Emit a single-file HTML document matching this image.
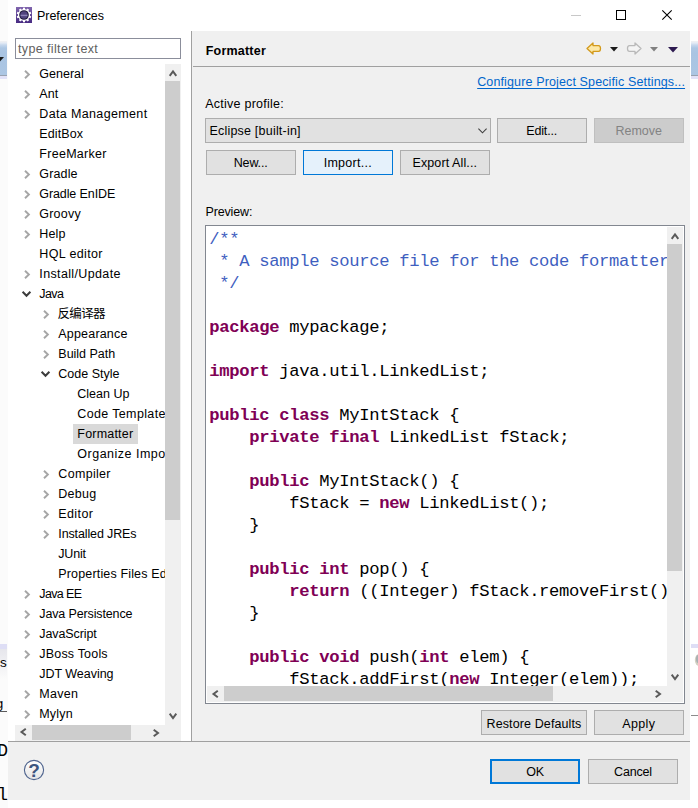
<!DOCTYPE html>
<html lang="en"><head><meta charset="utf-8"><title>Preferences</title>
<style>
html,body{margin:0;padding:0;}
body{width:698px;height:808px;overflow:hidden;background:#fff;position:relative;font-family:"Liberation Sans","Noto Sans CJK SC",sans-serif;}
.a{position:absolute;}
.t{position:absolute;white-space:pre;line-height:20px;height:20px;}
.btn{position:absolute;box-sizing:border-box;background:#e1e1e1;border:1px solid #adadad;}
.code{position:absolute;white-space:pre;font-family:"Liberation Mono","DejaVu Sans Mono",monospace;font-size:17.2px;letter-spacing:-0.32px;line-height:22px;color:#000;}
.k{color:#7f0055;font-weight:bold;}
.c{color:#3f5fbf;}
svg{position:absolute;overflow:visible;}
</style></head><body>

<div class="a" style="left:0;top:0;width:8px;height:808px;background:#fbfbfb"></div>
<div class="a" style="left:0;top:41px;width:7px;height:35px;background:linear-gradient(#f2f2f2 0,#e4ebf5 2px,#c6d8ed 4px,#adc7e4 7px,#a9c4e2 12px,#acc6e3 100%)"></div>
<div class="a" style="left:0;top:75px;width:7px;height:1px;background:#98a2b0"></div>
<div class="a" style="left:0;top:76px;width:7px;height:3px;background:#e2e2f8"></div>
<div class="a" style="left:691px;top:41px;width:7px;height:35px;background:linear-gradient(#f2f2f2 0,#e4ebf5 2px,#c6d8ed 4px,#adc7e4 7px,#a9c4e2 12px,#acc6e3 100%)"></div>
<div class="a" style="left:691px;top:75px;width:7px;height:1px;background:#98a2b0"></div>
<div class="a" style="left:691px;top:76px;width:7px;height:3px;background:#e2e2f8"></div>
<svg style="left:-4.2px;top:57px" width="8" height="5" viewBox="0 0 8 5"><path d="M0 0H8L4 4.6Z" fill="#1a1a1a"/></svg>
<div class="a" style="left:8px;top:0;width:682px;height:800px;background:#f0f0f0"></div>
<div class="a" style="left:8px;top:0;width:682px;height:31px;background:#fff"></div>
<div class="a" style="left:8px;top:31px;width:183px;height:710px;background:#fff"></div>
<div class="a" style="left:191px;top:31px;width:1px;height:710px;background:#a0a0a0"></div>
<div class="a" style="left:193px;top:66px;width:497px;height:1px;background:#a0a0a0"></div>
<div class="a" style="left:8px;top:741px;width:682px;height:1px;background:#a0a0a0"></div>
<svg style="left:16px;top:7px" width="16" height="16" viewBox="0 0 16 16">
<defs><linearGradient id="pg" x1="0" y1="0" x2="0" y2="1"><stop offset="0" stop-color="#8166ae"/><stop offset="0.5" stop-color="#5f4596"/><stop offset="1" stop-color="#482b82"/></linearGradient></defs>
<rect width="16" height="16" fill="url(#pg)"/>
<g fill="#fff"><circle cx="8" cy="8" r="6.1"/>
<rect x="7" y="0.7" width="2" height="14.6"/><rect x="7" y="0.7" width="2" height="14.6" transform="rotate(36 8 8)"/>
<rect x="7" y="0.7" width="2" height="14.6" transform="rotate(72 8 8)"/><rect x="7" y="0.7" width="2" height="14.6" transform="rotate(108 8 8)"/>
<rect x="7" y="0.7" width="2" height="14.6" transform="rotate(144 8 8)"/></g>
<circle cx="8" cy="8" r="4.8" fill="#1d1838"/><circle cx="8" cy="8" r="3.7" fill="#51447e"/>
<rect x="4.6" y="7.7" width="6.8" height="1.4" fill="#8c83b6"/>
</svg>
<div class="a" style="left:571px;top:15px;width:10px;height:1px;background:#c8c8c8"></div>
<div class="a" style="left:616px;top:10px;width:10px;height:10px;box-sizing:border-box;border:1px solid #000"></div>
<svg style="left:662px;top:10px" width="10" height="10" viewBox="0 0 10 10"><path d="M0.3 0.3L9.7 9.7M9.7 0.3L0.3 9.7" stroke="#000" stroke-width="1.1" fill="none"/></svg>
<div class="a" style="left:15px;top:38px;width:166px;height:21px;box-sizing:border-box;border:1px solid #8b8e9b;background:#fff"></div>
<div class="a" id="tree" style="left:15px;top:64px;width:150px;height:661px;overflow:hidden;background:#fff">
<div class="a" style="left:58px;top:360px;width:65px;height:20px;background:#d9d9d9"></div>
</div>
<svg style="left:23.6px;top:69.7px" width="6" height="9" viewBox="0 0 6 9"><path d="M1 0.7L4.9 4.5L1 8.3" stroke="#a6a6a6" stroke-width="1.9" fill="none"/></svg>
<svg style="left:23.6px;top:89.7px" width="6" height="9" viewBox="0 0 6 9"><path d="M1 0.7L4.9 4.5L1 8.3" stroke="#a6a6a6" stroke-width="1.9" fill="none"/></svg>
<svg style="left:23.6px;top:109.7px" width="6" height="9" viewBox="0 0 6 9"><path d="M1 0.7L4.9 4.5L1 8.3" stroke="#a6a6a6" stroke-width="1.9" fill="none"/></svg>
<svg style="left:23.6px;top:169.7px" width="6" height="9" viewBox="0 0 6 9"><path d="M1 0.7L4.9 4.5L1 8.3" stroke="#a6a6a6" stroke-width="1.9" fill="none"/></svg>
<svg style="left:23.6px;top:189.7px" width="6" height="9" viewBox="0 0 6 9"><path d="M1 0.7L4.9 4.5L1 8.3" stroke="#a6a6a6" stroke-width="1.9" fill="none"/></svg>
<svg style="left:23.6px;top:209.7px" width="6" height="9" viewBox="0 0 6 9"><path d="M1 0.7L4.9 4.5L1 8.3" stroke="#a6a6a6" stroke-width="1.9" fill="none"/></svg>
<svg style="left:23.6px;top:229.7px" width="6" height="9" viewBox="0 0 6 9"><path d="M1 0.7L4.9 4.5L1 8.3" stroke="#a6a6a6" stroke-width="1.9" fill="none"/></svg>
<svg style="left:23.6px;top:269.7px" width="6" height="9" viewBox="0 0 6 9"><path d="M1 0.7L4.9 4.5L1 8.3" stroke="#a6a6a6" stroke-width="1.9" fill="none"/></svg>
<svg style="left:22.3px;top:291.1px" width="9" height="6" viewBox="0 0 9 6"><path d="M0.6 0.8L4.5 4.8L8.4 0.8" stroke="#3c3c3c" stroke-width="2" fill="none"/></svg>
<svg style="left:42.599999999999994px;top:309.7px" width="6" height="9" viewBox="0 0 6 9"><path d="M1 0.7L4.9 4.5L1 8.3" stroke="#a6a6a6" stroke-width="1.9" fill="none"/></svg>
<svg style="left:42.599999999999994px;top:329.7px" width="6" height="9" viewBox="0 0 6 9"><path d="M1 0.7L4.9 4.5L1 8.3" stroke="#a6a6a6" stroke-width="1.9" fill="none"/></svg>
<svg style="left:42.599999999999994px;top:349.7px" width="6" height="9" viewBox="0 0 6 9"><path d="M1 0.7L4.9 4.5L1 8.3" stroke="#a6a6a6" stroke-width="1.9" fill="none"/></svg>
<svg style="left:41.3px;top:371.1px" width="9" height="6" viewBox="0 0 9 6"><path d="M0.6 0.8L4.5 4.8L8.4 0.8" stroke="#3c3c3c" stroke-width="2" fill="none"/></svg>
<svg style="left:42.599999999999994px;top:469.7px" width="6" height="9" viewBox="0 0 6 9"><path d="M1 0.7L4.9 4.5L1 8.3" stroke="#a6a6a6" stroke-width="1.9" fill="none"/></svg>
<svg style="left:42.599999999999994px;top:489.7px" width="6" height="9" viewBox="0 0 6 9"><path d="M1 0.7L4.9 4.5L1 8.3" stroke="#a6a6a6" stroke-width="1.9" fill="none"/></svg>
<svg style="left:42.599999999999994px;top:509.7px" width="6" height="9" viewBox="0 0 6 9"><path d="M1 0.7L4.9 4.5L1 8.3" stroke="#a6a6a6" stroke-width="1.9" fill="none"/></svg>
<svg style="left:42.599999999999994px;top:529.7px" width="6" height="9" viewBox="0 0 6 9"><path d="M1 0.7L4.9 4.5L1 8.3" stroke="#a6a6a6" stroke-width="1.9" fill="none"/></svg>
<svg style="left:23.6px;top:589.7px" width="6" height="9" viewBox="0 0 6 9"><path d="M1 0.7L4.9 4.5L1 8.3" stroke="#a6a6a6" stroke-width="1.9" fill="none"/></svg>
<svg style="left:23.6px;top:609.7px" width="6" height="9" viewBox="0 0 6 9"><path d="M1 0.7L4.9 4.5L1 8.3" stroke="#a6a6a6" stroke-width="1.9" fill="none"/></svg>
<svg style="left:23.6px;top:629.7px" width="6" height="9" viewBox="0 0 6 9"><path d="M1 0.7L4.9 4.5L1 8.3" stroke="#a6a6a6" stroke-width="1.9" fill="none"/></svg>
<svg style="left:23.6px;top:649.7px" width="6" height="9" viewBox="0 0 6 9"><path d="M1 0.7L4.9 4.5L1 8.3" stroke="#a6a6a6" stroke-width="1.9" fill="none"/></svg>
<svg style="left:23.6px;top:689.7px" width="6" height="9" viewBox="0 0 6 9"><path d="M1 0.7L4.9 4.5L1 8.3" stroke="#a6a6a6" stroke-width="1.9" fill="none"/></svg>
<svg style="left:23.6px;top:709.7px" width="6" height="9" viewBox="0 0 6 9"><path d="M1 0.7L4.9 4.5L1 8.3" stroke="#a6a6a6" stroke-width="1.9" fill="none"/></svg>
<div class="a" style="left:165px;top:64px;width:16px;height:661px;background:#f0f0f0"></div>
<div class="a" style="left:165px;top:81px;width:15px;height:439px;background:#cdcdcd"></div>
<svg style="left:168.6px;top:69.7px" width="8" height="6.5" viewBox="0 0 8 6.5"><path d="M0.7 5.8L4 1.5L7.3 5.8" stroke="#5a5a5a" stroke-width="2" fill="none"/></svg>
<svg style="left:168.6px;top:712.7px" width="8" height="6.5" viewBox="0 0 8 6.5"><path d="M0.7 0.7L4 5L7.3 0.7" stroke="#5a5a5a" stroke-width="2" fill="none"/></svg>
<div class="a" style="left:15px;top:725px;width:166px;height:16px;background:#f0f0f0"></div>
<div class="a" style="left:32px;top:725px;width:99px;height:15px;background:#cdcdcd"></div>
<svg style="left:19.8px;top:728.4px" width="6.5" height="8" viewBox="0 0 6.5 8"><path d="M5.8 0.7L1.5 4L5.8 7.3" stroke="#5a5a5a" stroke-width="2" fill="none"/></svg>
<svg style="left:152.8px;top:728.6px" width="6.5" height="8" viewBox="0 0 6.5 8"><path d="M0.7 0.7L5 4L0.7 7.3" stroke="#5a5a5a" stroke-width="2" fill="none"/></svg>
<svg style="left:586.2px;top:42.4px" width="16" height="13" viewBox="0 0 16 13">
<path d="M1 6.5L7 0.9V3.6H12.5Q14.5 3.6 14.5 6.5Q14.5 9.4 12.5 9.4H7V12.1Z" fill="#fde9a8" stroke="#d39a1c" stroke-width="1.3" stroke-linejoin="round"/></svg>
<svg style="left:609.5px;top:46.8px" width="8" height="5" viewBox="0 0 8 5"><path d="M0 0H8L4 4.6Z" fill="#1a1a1a"/></svg>
<svg style="left:626.2px;top:42.4px" width="16" height="13" viewBox="0 0 16 13">
<path d="M15 6.5L9 0.9V3.6H3.5Q1.5 3.6 1.5 6.5Q1.5 9.4 3.5 9.4H9V12.1Z" fill="#f4f4f4" stroke="#b9b9b9" stroke-width="1.3" stroke-linejoin="round"/></svg>
<svg style="left:649.5px;top:46.8px" width="8" height="5" viewBox="0 0 8 5"><path d="M0 0H8L4 4.6Z" fill="#808080"/></svg>
<svg style="left:668px;top:47px" width="10" height="6" viewBox="0 0 10 6"><path d="M0 0H10L5 5.6Z" fill="#2d1a50"/></svg>
<div class="btn" style="left:205px;top:118px;width:286px;height:25px"></div>
<svg style="left:477.5px;top:128px" width="9" height="6" viewBox="0 0 9 6"><path d="M0.4 0.6L4.5 4.8L8.6 0.6" stroke="#404040" stroke-width="1.1" fill="none"/></svg>
<div class="btn" style="left:497px;top:118px;width:90px;height:25px;"></div>
<div class="btn" style="left:594px;top:118px;width:90px;height:25px;background:#cccccc;border-color:#bfbfbf;"></div>
<div class="btn" style="left:206px;top:150px;width:90px;height:25px;"></div>
<div class="btn" style="left:303px;top:150px;width:90px;height:25px;background:#e5f1fb;border-color:#0078d7;"></div>
<div class="btn" style="left:400px;top:150px;width:90px;height:25px;"></div>
<div class="a" style="left:205px;top:225px;width:480px;height:479px;box-sizing:border-box;border:1px solid #828790;background:#fff"></div>
<div class="a" style="left:206px;top:226px;width:461px;height:460px;background:#fff;overflow:hidden">
<div class="code" id="code" style="left:3.3px;top:2.5px"><span class="c">/**</span>
<span class="c"> * A sample source file for the code formatter preview</span>
<span class="c"> */</span>

<span class="k">package</span> mypackage;

<span class="k">import</span> java.util.LinkedList;

<span class="k">public</span> <span class="k">class</span> MyIntStack {
    <span class="k">private</span> <span class="k">final</span> LinkedList fStack;

    <span class="k">public</span> MyIntStack() {
        fStack = <span class="k">new</span> LinkedList();
    }

    <span class="k">public</span> <span class="k">int</span> pop() {
        <span class="k">return</span> ((Integer) fStack.removeFirst()).intValue();
    }

    <span class="k">public</span> <span class="k">void</span> push(<span class="k">int</span> elem) {
        fStack.addFirst(<span class="k">new</span> Integer(elem));
    }</div>
</div>
<div class="a" style="left:667px;top:227px;width:16px;height:459px;background:#f0f0f0"></div>
<div class="a" style="left:667px;top:244px;width:15px;height:327px;background:#cdcdcd"></div>
<svg style="left:670.5px;top:232.6px" width="8" height="6.5" viewBox="0 0 8 6.5"><path d="M0.7 5.8L4 1.5L7.3 5.8" stroke="#5a5a5a" stroke-width="2" fill="none"/></svg>
<svg style="left:670.7px;top:673.6px" width="8" height="6.5" viewBox="0 0 8 6.5"><path d="M0.7 0.7L4 5L7.3 0.7" stroke="#5a5a5a" stroke-width="2" fill="none"/></svg>
<div class="a" style="left:207px;top:686px;width:476px;height:16px;background:#f0f0f0"></div>
<div class="a" style="left:224px;top:686px;width:329px;height:15px;background:#cdcdcd"></div>
<svg style="left:212px;top:690px" width="6.5" height="8" viewBox="0 0 6.5 8"><path d="M5.8 0.7L1.5 4L5.8 7.3" stroke="#5a5a5a" stroke-width="2" fill="none"/></svg>
<svg style="left:655px;top:690px" width="6.5" height="8" viewBox="0 0 6.5 8"><path d="M0.7 0.7L5 4L0.7 7.3" stroke="#5a5a5a" stroke-width="2" fill="none"/></svg>
<div class="btn" style="left:481px;top:710px;width:106px;height:25px;"></div>
<div class="btn" style="left:594px;top:710px;width:90px;height:25px;"></div>
<svg style="left:22px;top:758px" width="24" height="24" viewBox="0 0 24 24"><defs><linearGradient id="hg" x1="0" y1="0" x2="0" y2="1"><stop offset="0" stop-color="#fff"/><stop offset="1" stop-color="#e4e4e4"/></linearGradient></defs><circle cx="12" cy="12" r="9.6" fill="url(#hg)" stroke="#4f648e" stroke-width="1.1"/></svg>
<div class="btn" style="left:490px;top:759px;width:90px;height:25px;border:2px solid #0078d7;"></div>
<div class="btn" style="left:588px;top:759px;width:90px;height:25px;"></div>
<div class="a" style="left:0;top:644px;width:7px;height:5px;background:#dedef5"></div>
<div class="a" style="left:0;top:649px;width:7px;height:30px;background:linear-gradient(#e6e6ec,#fbfbfb)"></div>
<div class="a" style="left:0;top:630px;width:7px;height:100px;overflow:hidden"><span class="t" style="left:-7.6px;top:23px;font-size:13.5px">ns</span><span class="t" style="left:-4.2px;top:64px;font-size:13.5px">g</span></div>
<div class="a" style="left:0;top:711px;width:7px;height:1px;background:#5a5a5a"></div>
<div class="a" style="left:0;top:735px;width:8px;height:73px;overflow:hidden;font-family:'Liberation Mono',monospace"><span class="t" style="left:-2.8px;top:6px;font-size:18px">D</span><span class="t" style="left:-2.8px;top:50px;font-size:18px">l</span></div>
<div class="a" style="left:691px;top:644px;width:7px;height:4px;background:#dedef5"></div>
<div class="a" style="left:691px;top:715px;width:7px;height:1px;background:#8c8c8c"></div>
<svg style="left:691px;top:651px" width="7" height="17" viewBox="0 0 7 17"><ellipse cx="8.2" cy="9" rx="4.4" ry="6" fill="#d2d0c2"/><ellipse cx="7.3" cy="8" rx="2.3" ry="4" fill="#a9b0b3"/></svg>
<span class="t" id="title" style="left:37px;top:6.00px;font-size:12.5px;color:#000;letter-spacing:-0.039px;">Preferences</span>
<span class="t" id="filter" style="left:18px;top:39.00px;font-size:12.5px;color:#606060;letter-spacing:0.365px;">type filter text</span>
<span class="t" id="tr0" style="left:39.3px;top:64.00px;font-size:12.5px;color:#000;letter-spacing:0.002px;">General</span>
<span class="t" id="tr1" style="left:39.3px;top:84.00px;font-size:12.5px;color:#000;letter-spacing:0.094px;">Ant</span>
<span class="t" id="tr2" style="left:39.3px;top:104.00px;font-size:12.5px;color:#000;letter-spacing:0.356px;">Data Management</span>
<span class="t" id="tr3" style="left:39.3px;top:124.00px;font-size:12.5px;color:#000;letter-spacing:0.093px;">EditBox</span>
<span class="t" id="tr4" style="left:39.3px;top:144.00px;font-size:12.5px;color:#000;letter-spacing:0.285px;">FreeMarker</span>
<span class="t" id="tr5" style="left:39.3px;top:164.00px;font-size:12.5px;color:#000;letter-spacing:0.140px;">Gradle</span>
<span class="t" id="tr6" style="left:39.3px;top:184.00px;font-size:12.5px;color:#000;letter-spacing:-0.098px;">Gradle EnIDE</span>
<span class="t" id="tr7" style="left:39.3px;top:204.00px;font-size:12.5px;color:#000;letter-spacing:0.219px;">Groovy</span>
<span class="t" id="tr8" style="left:39.3px;top:224.00px;font-size:12.5px;color:#000;letter-spacing:0.166px;">Help</span>
<span class="t" id="tr9" style="left:39.3px;top:244.00px;font-size:12.5px;color:#000;letter-spacing:0.360px;">HQL editor</span>
<span class="t" id="tr10" style="left:39.3px;top:264.00px;font-size:12.5px;color:#000;letter-spacing:0.360px;">Install/Update</span>
<span class="t" id="tr11" style="left:39.3px;top:284.00px;font-size:12.5px;color:#000;letter-spacing:-0.602px;">Java</span>
<span class="t" id="tr12" style="left:57.5px;top:304.00px;font-size:12.5px;color:#000;letter-spacing:-0.662px;">反编译器</span>
<span class="t" id="tr13" style="left:58.3px;top:324.00px;font-size:12.5px;color:#000;letter-spacing:0.187px;">Appearance</span>
<span class="t" id="tr14" style="left:58.3px;top:344.00px;font-size:12.5px;color:#000;letter-spacing:-0.009px;">Build Path</span>
<span class="t" id="tr15" style="left:58.3px;top:364.00px;font-size:12.5px;color:#000;letter-spacing:0.005px;">Code Style</span>
<span class="t" id="tr16" style="left:77.3px;top:384.00px;font-size:12.5px;color:#000;letter-spacing:0.010px;">Clean Up</span>
<span class="t" id="tr17" style="left:77.3px;top:404.00px;font-size:12.5px;color:#000;letter-spacing:0.355px;max-width:87.7px;overflow:hidden;">Code Templates</span>
<span class="t" id="tr18" style="left:77.3px;top:424.00px;font-size:12.5px;color:#000;letter-spacing:0.201px;">Formatter</span>
<span class="t" id="tr19" style="left:77.3px;top:444.00px;font-size:12.5px;color:#000;letter-spacing:0.497px;max-width:87.7px;overflow:hidden;">Organize Imports</span>
<span class="t" id="tr20" style="left:58.3px;top:464.00px;font-size:12.5px;color:#000;letter-spacing:0.318px;">Compiler</span>
<span class="t" id="tr21" style="left:58.3px;top:484.00px;font-size:12.5px;color:#000;letter-spacing:0.257px;">Debug</span>
<span class="t" id="tr22" style="left:58.3px;top:504.00px;font-size:12.5px;color:#000;letter-spacing:0.390px;">Editor</span>
<span class="t" id="tr23" style="left:58.3px;top:524.00px;font-size:12.5px;color:#000;letter-spacing:-0.126px;">Installed JREs</span>
<span class="t" id="tr24" style="left:58.3px;top:544.00px;font-size:12.5px;color:#000;letter-spacing:-0.174px;">JUnit</span>
<span class="t" id="tr25" style="left:58.3px;top:564.00px;font-size:12.5px;color:#000;letter-spacing:0.156px;max-width:106.7px;overflow:hidden;">Properties Files Editor</span>
<span class="t" id="tr26" style="left:39.3px;top:584.00px;font-size:12.5px;color:#000;letter-spacing:-0.640px;">Java EE</span>
<span class="t" id="tr27" style="left:39.3px;top:604.00px;font-size:12.5px;color:#000;letter-spacing:-0.135px;">Java Persistence</span>
<span class="t" id="tr28" style="left:39.3px;top:624.00px;font-size:12.5px;color:#000;letter-spacing:-0.101px;">JavaScript</span>
<span class="t" id="tr29" style="left:39.3px;top:644.00px;font-size:12.5px;color:#000;letter-spacing:0.184px;">JBoss Tools</span>
<span class="t" id="tr30" style="left:39.3px;top:664.00px;font-size:12.5px;color:#000;letter-spacing:-0.036px;">JDT Weaving</span>
<span class="t" id="tr31" style="left:39.3px;top:684.00px;font-size:12.5px;color:#000;letter-spacing:0.260px;">Maven</span>
<span class="t" id="tr32" style="left:39.3px;top:704.00px;font-size:12.5px;color:#000;letter-spacing:0.165px;">Mylyn</span>
<span class="t" id="hdr" style="left:205.7px;top:41.00px;font-size:12.5px;color:#000;letter-spacing:0.218px;font-weight:bold;">Formatter</span>
<span class="t" id="link" style="left:477.2px;top:72.00px;font-size:12.5px;color:#0066cc;letter-spacing:0.131px;text-decoration:underline;text-underline-offset:1.5px;text-decoration-skip-ink:none;">Configure Project Specific Settings...</span>
<span class="t" id="ap" style="left:205.3px;top:94.00px;font-size:12.5px;color:#000;letter-spacing:0.239px;">Active profile:</span>
<span class="t" id="combo" style="left:209.4px;top:121.00px;font-size:12.5px;color:#000;letter-spacing:0.214px;">Eclipse [built-in]</span>
<span class="t" id="bedit" style="left:526.2px;top:121.00px;font-size:12.5px;color:#000;letter-spacing:-0.149px;">Edit...</span>
<span class="t" id="bremove" style="left:615.4px;top:121.00px;font-size:12.5px;color:#838383;letter-spacing:0.028px;">Remove</span>
<span class="t" id="bnew" style="left:233.7px;top:153.00px;font-size:12.5px;color:#000;letter-spacing:-0.136px;">New...</span>
<span class="t" id="bimport" style="left:323.7px;top:153.00px;font-size:12.5px;color:#000;letter-spacing:0.265px;">Import...</span>
<span class="t" id="bexport" style="left:412.5px;top:153.00px;font-size:12.5px;color:#000;letter-spacing:0.101px;">Export All...</span>
<span class="t" id="pv" style="left:205.5px;top:202.00px;font-size:12.5px;color:#000;letter-spacing:-0.152px;">Preview:</span>
<span class="t" id="brestore" style="left:486.5px;top:714.00px;font-size:12.5px;color:#000;letter-spacing:0.116px;">Restore Defaults</span>
<span class="t" id="bapply" style="left:622.3px;top:714.00px;font-size:12.5px;color:#000;letter-spacing:0.337px;">Apply</span>
<span class="t" id="help" style="left:28.3px;top:760.50px;font-size:19px;color:#3d5680;letter-spacing:0.000px;font-weight:bold;">?</span>
<span class="t" id="bok" style="left:526.2px;top:762.00px;font-size:12.5px;color:#000;letter-spacing:-0.042px;">OK</span>
<span class="t" id="bcancel" style="left:614.1px;top:762.00px;font-size:12.5px;color:#000;letter-spacing:-0.186px;">Cancel</span>
</body></html>
